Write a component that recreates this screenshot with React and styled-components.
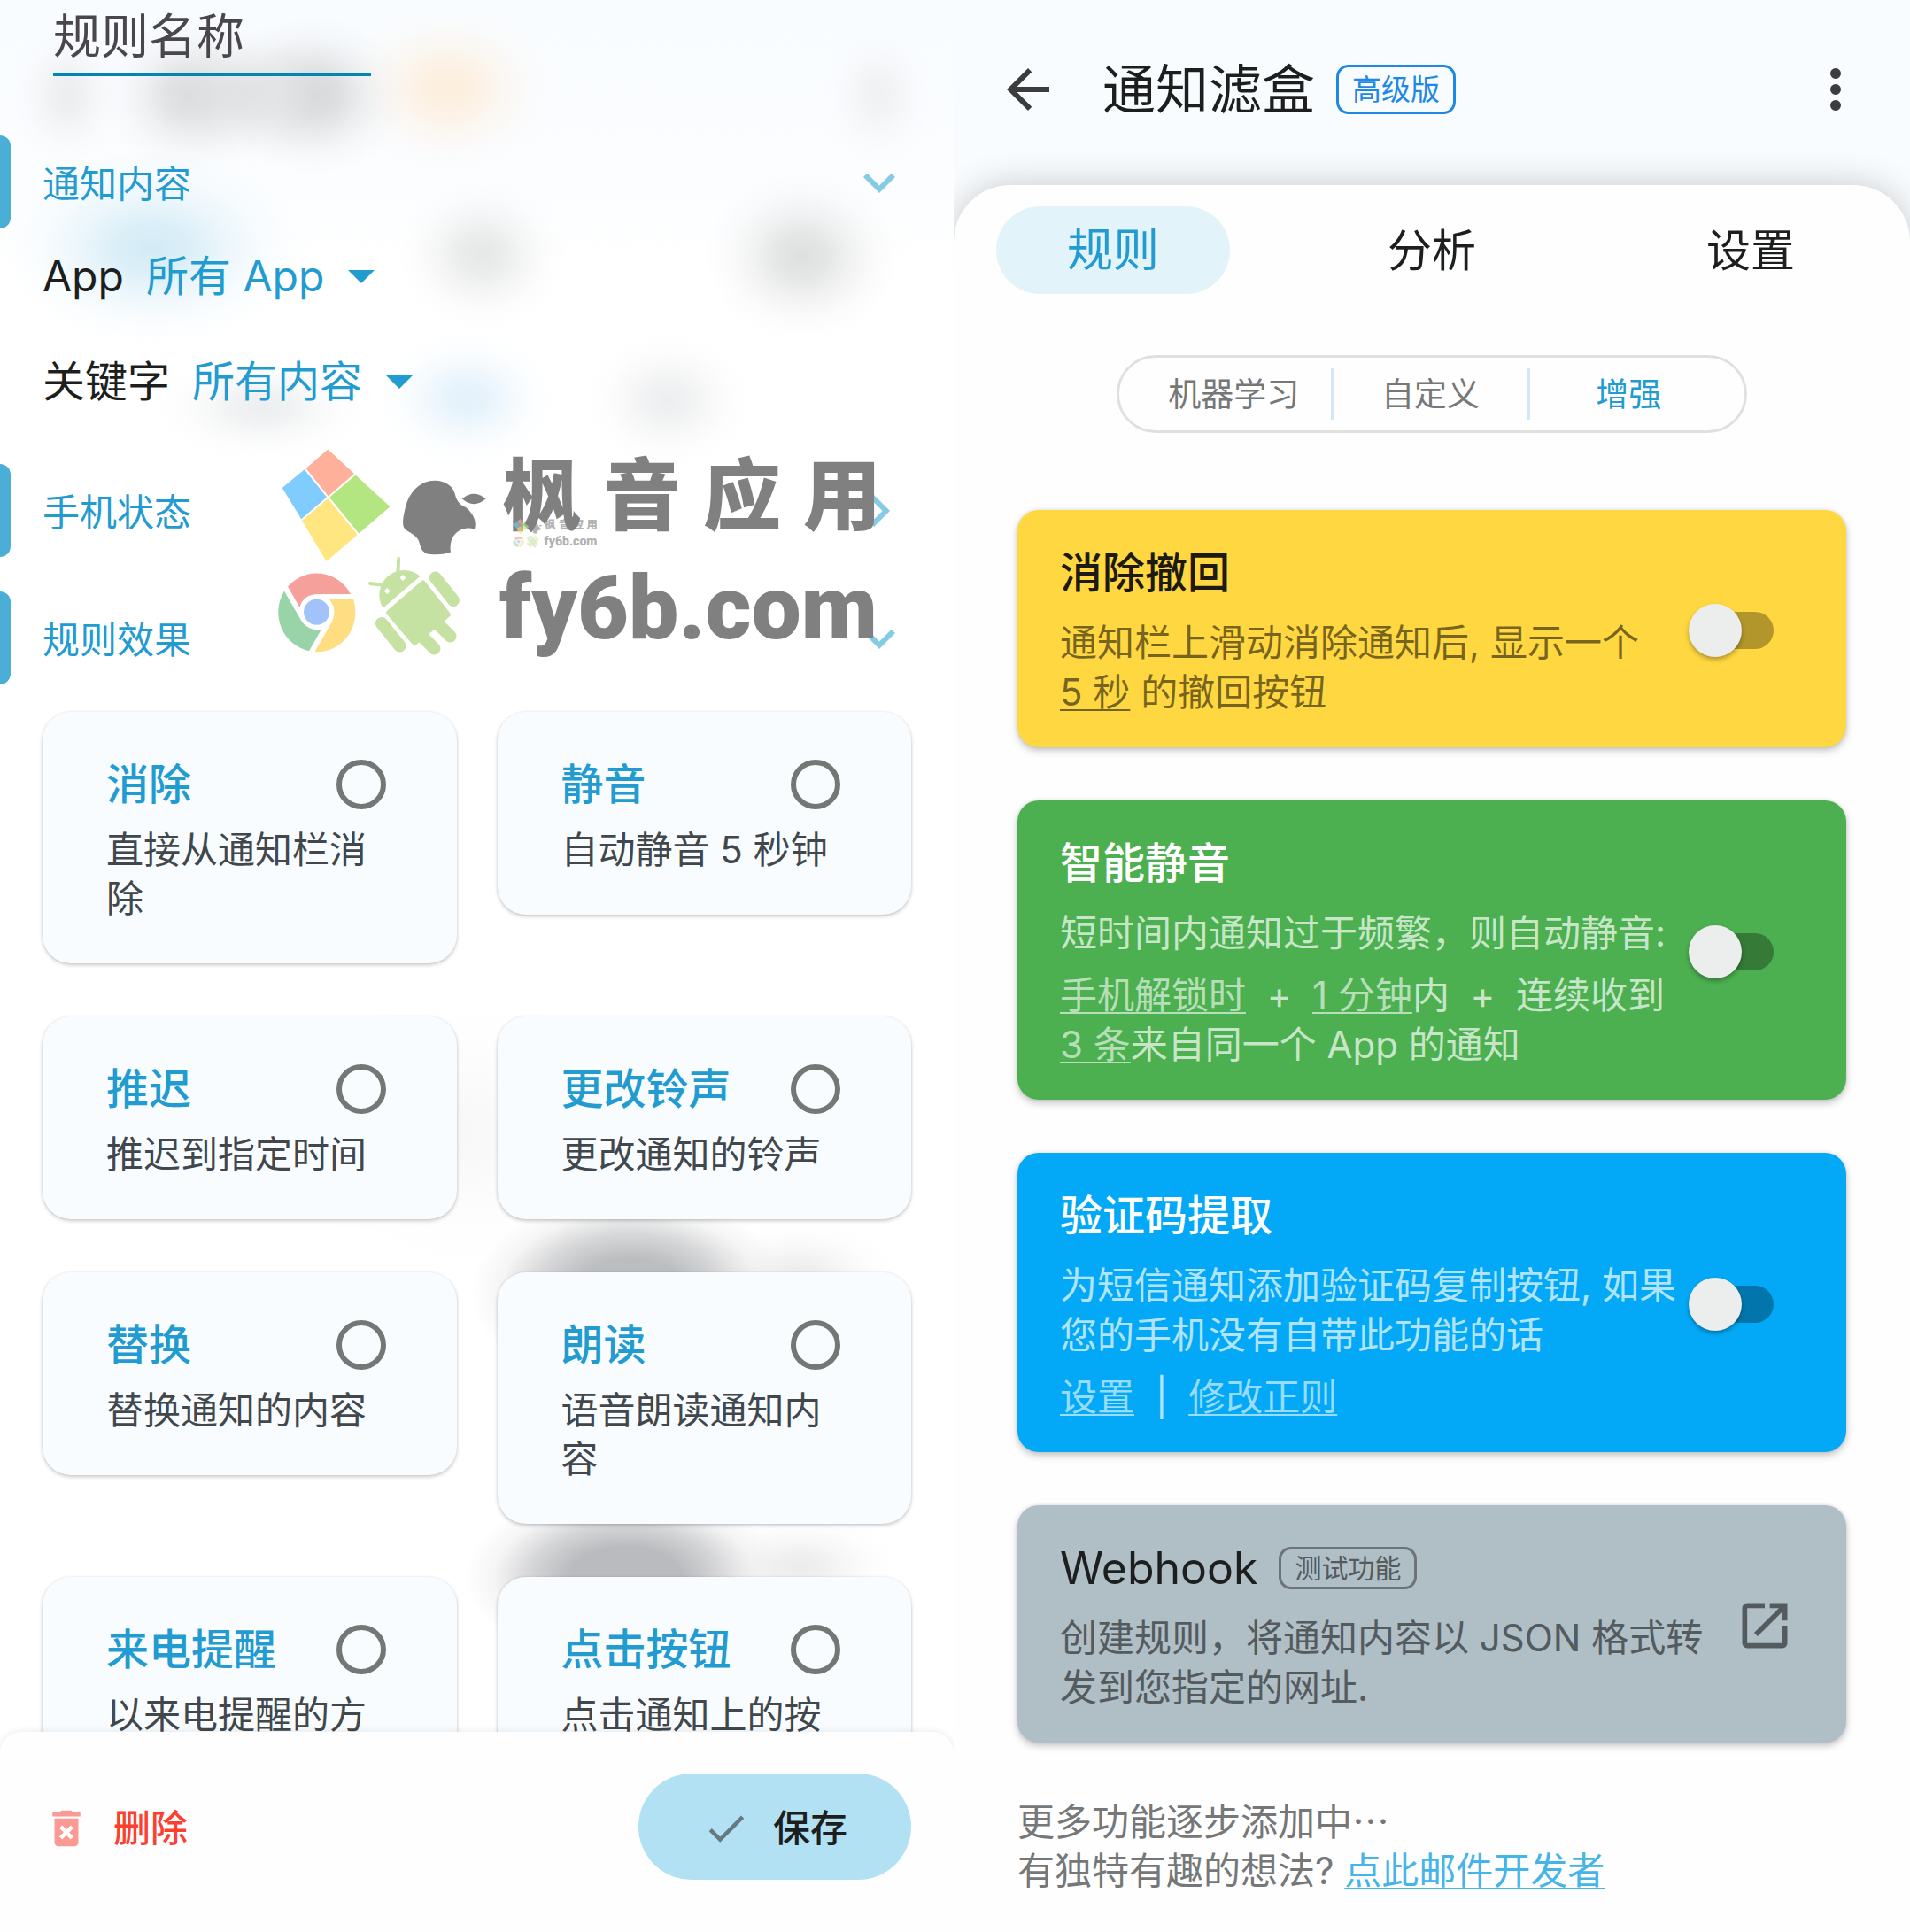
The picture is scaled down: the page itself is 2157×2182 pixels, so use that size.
import { useState } from 'react';
import styled, { createGlobalStyle } from 'styled-components';

const GlobalStyle = createGlobalStyle`
  * {
    box-sizing: border-box;
  }

  body {
    margin: 0;
    background: #fff;
    color: #1d1f1f;
    font-family: Inter, "Noto Sans CJK SC", sans-serif;
    font-size: 42px;
    line-height: 56px;
  }

  h1, h2, h3, p {
    margin: 0;
    font-weight: 400;
  }

  button, input, select {
    font: inherit;
    color: inherit;
    background: none;
    border: none;
    border-radius: 0;
    margin: 0;
    padding: 0;
    outline: none;
  }

  svg {
    display: block;
    flex: none;
  }
`;

// x, y, rx, ry, colour
const spots = [
  [76, 107, 65, 80, '236, 237, 238'],
  [213, 107, 100, 90, '220, 221, 222'],
  [284, 107, 120, 80, '226, 227, 228'],
  [355, 107, 105, 90, '213, 214, 216'],
  [506, 100, 120, 95, '253, 238, 220'],
  [992, 107, 65, 80, '240, 241, 243'],
  [172, 280, 170, 110, '211, 235, 246'],
  [544, 287, 95, 85, '230, 231, 231'],
  [906, 289, 110, 95, '222, 223, 223'],
  [296, 460, 120, 60, '236, 238, 239'],
  [527, 450, 100, 75, '226, 241, 251'],
  [754, 452, 95, 75, '237, 238, 239'],
  [520, 1280, 180, 160, '248, 248, 249'],
  [902, 1440, 110, 60, '236, 236, 237'],
  [902, 1770, 110, 60, '236, 236, 237'],
];

const shades = [
  [712, 1460, 180, 110, '188, 189, 191'],
  [706, 1782, 180, 100, '186, 187, 190'],
];

const glow = ([x, y, rx, ry, rgb]) =>
  `radial-gradient(${rx}px ${ry}px at ${x}px ${y}px, rgb(${rgb}), rgba(${rgb}, 0.8) 25%, rgba(${rgb}, 0.4) 50%, rgba(${rgb}, 0.12) 75%, rgba(${rgb}, 0))`;

const shade = ([x, y, rx, ry, rgb]) =>
  `radial-gradient(${rx}px ${ry}px at ${x}px ${y}px, rgb(${rgb}) 35%, rgba(${rgb}, 0.6) 60%, rgba(${rgb}, 0.15) 82%, rgba(${rgb}, 0))`;

const backdrop = [
  ...spots.map(glow),
  ...shades.map(shade),
  'linear-gradient(#f9fcff 0, #fbfdff 200px, #fff 300px)',
].join(', ');

const Page = styled.div`
  display: grid;
  grid-template-columns: 1077fr 1080fr;
  min-height: 100vh;
`;

/* rule editor */

const Editor = styled.section`
  position: relative;
  display: flex;
  flex-direction: column;
  height: 100vh;
  overflow: hidden;
  background: ${backdrop};
`;

const EditorBody = styled.div`
  flex: 1;
  min-height: 0;
  overflow: hidden;
`;

const NameInput = styled.input`
  display: block;
  width: 359px;
  height: 86px;
  margin: 0 0 67px 60px;
  border-bottom: 3px solid #0484b4;
  font-size: 54px;

  &::placeholder {
    color: #4a464e;
    opacity: 1;
  }
`;

const SectionHeader = styled.button`
  display: flex;
  align-items: center;
  gap: 36px;
  width: 100%;
  height: 105px;
  margin-top: ${(p) => (p.$spaced ? '39px' : '0')};
  padding-right: 48px;
  color: #229bd0;
  text-align: left;
  cursor: pointer;

  &::before {
    content: '';
    width: 12px;
    height: 105px;
    border-radius: 0 12px 12px 0;
    background: #4baed6;
  }

  svg {
    margin-left: auto;
    fill: #86cbe6;
    transform: ${(p) => (p.$open ? 'none' : 'rotate(-90deg)')};
  }
`;

const SectionTitle = styled.span`
  padding-top: 4px;
`;

const Fields = styled.div`
  display: grid;
  gap: 11px;
  padding: 0 48px;
`;

const Field = styled.div`
  display: flex;
  align-items: center;
  height: 108px;
  gap: 25px;
  font-size: 48px;
`;

const Picker = styled.div`
  display: flex;
  align-items: center;
  gap: 26px;
  color: #229bd0;

  select {
    appearance: none;
    line-height: 72px;
    cursor: pointer;
  }

  svg {
    fill: #229bd0;
  }
`;

const EffectGrid = styled.div`
  display: grid;
  grid-template-columns: 1fr 1fr;
  align-items: start;
  gap: 60px 46px;
  padding: 31px 48px 60px;
`;

const EffectCard = styled.label`
  padding: 48px 80px 46px 72px;
  border-radius: 32px;
  background: #f9fcff;
  box-shadow: 0 2px 4px rgba(0, 0, 0, 0.2), 0 0 3px rgba(0, 0, 0, 0.08);
  cursor: pointer;
`;

const EffectTop = styled.div`
  display: flex;
  align-items: center;
  justify-content: space-between;
  height: 68px;
  margin-bottom: 12px;

  h3 {
    color: #229bd0;
    font-size: 48px;
    font-weight: 500;
  }
`;

const Radio = styled.input`
  appearance: none;
  width: 56px;
  height: 56px;
  border: 6px solid #757777;
  border-radius: 50%;

  &:checked {
    border-color: #229bd0;
    background: #229bd0;
    background-clip: content-box;
    padding: 8px;
  }
`;

const EffectText = styled.p`
  color: #41484d;
  line-height: 55px;
`;

const ActionBar = styled.footer`
  display: flex;
  align-items: flex-start;
  justify-content: space-between;
  height: 226px;
  padding: 47px 48px 0;
  border-radius: 24px 24px 0 0;
  background: #fefefe;
  box-shadow: 0 0 8px rgba(0, 0, 0, 0.1);
`;

const ActionButton = styled.button`
  display: flex;
  align-items: center;
  gap: 26px;
  height: 120px;
  padding: ${(p) => (p.$primary ? '4px 72px 0' : '4px 0 0')};
  border-radius: 60px;
  background: ${(p) => (p.$primary ? '#b2e1f4' : 'none')};
  color: ${(p) => (p.$primary ? '#1d1f1f' : '#fb4030')};
  font-weight: 500;
  cursor: pointer;
`;

/* watermark, sized from its own font-size */

const Mark = styled.div`
  position: absolute;
  left: ${(p) => p.$x}px;
  top: ${(p) => p.$y}px;
  display: flex;
  gap: 0.09em;
  font-size: ${(p) => p.$size}px;
  color: #808080;
  opacity: ${(p) => p.$opacity};
  pointer-events: none;

  svg {
    width: 2.45em;
    height: 2.5em;
  }
`;

const MarkText = styled.div`
  padding-top: 0.08em;
`;

const MarkName = styled.div`
  display: flex;
  gap: 0.25em;
  padding-left: 0.04em;
  line-height: 0.9em;

  span {
    font-size: 0.88em;
    font-family: "Noto Sans CJK SC", sans-serif;
    font-weight: 900;
  }
`;

const MarkSite = styled.div`
  margin-top: 0.39em;
  line-height: 1em;
  font-family: Roboto, sans-serif;
  font-weight: 900;
`;

/* filter box */

const FilterBox = styled.section`
  display: flex;
  flex-direction: column;
  height: 100vh;
  overflow: hidden;
  background: #f8fcff;
`;

const AppBar = styled.header`
  display: flex;
  align-items: center;
  padding: 65px 48px 72px;

  h1 {
    margin: 0 24px 0 48px;
    font-size: 60px;
    line-height: 72px;
  }
`;

const IconButton = styled.button`
  cursor: pointer;
  margin-left: ${(p) => (p.$end ? 'auto' : '0')};

  svg {
    fill: #3c3c3e;
  }
`;

const Badge = styled.span`
  padding: 0 15px;
  border: 3px solid ${(p) => (p.$small ? '#6c7478' : '#1e88e5')};
  border-radius: 14px;
  color: ${(p) => (p.$small ? '#545b5f' : '#1e88e5')};
  font-size: ${(p) => (p.$small ? '30px' : '33px')};
  line-height: ${(p) => (p.$small ? '42px' : '50px')};
`;

const Sheet = styled.main`
  flex: 1;
  padding-top: 24px;
  border-radius: 64px 64px 0 0;
  background: #fefefe;
  box-shadow: 0 0 40px rgba(0, 0, 0, 0.2);
`;

const Tabs = styled.nav`
  display: grid;
  grid-template-columns: repeat(3, 1fr);
  justify-items: center;
`;

const Tab = styled.button`
  width: 264px;
  height: 99px;
  border-radius: 50px;
  background: ${(p) => (p.$active ? '#e3f3fa' : 'none')};
  color: ${(p) => (p.$active ? '#229bd0' : '#1d1f1f')};
  font-size: ${(p) => (p.$active ? '52px' : '50px')};
  cursor: pointer;
`;

const Segments = styled.div`
  display: grid;
  grid-template-columns: repeat(3, 1fr);
  align-items: center;
  width: 66%;
  height: 88px;
  margin: 69px auto 87px;
  padding: 0 20px;
  border: 3px solid #e0e0e0;
  border-radius: 44px;
`;

const Segment = styled.button`
  height: 58px;
  padding-top: 2px;
  border-right: 3px solid #cfe8f4;
  color: ${(p) => (p.$active ? '#229bd0' : '#757778')};
  font-size: 37px;
  cursor: pointer;

  &:last-child {
    border-right: none;
  }
`;

const Features = styled.div`
  display: grid;
  gap: 60px;
  padding: 0 72px;
`;

const tones = {
  yellow: { bg: '#ffd740', title: '#1c1a12', text: 'rgba(0, 0, 0, 0.54)', link: 'rgba(0, 0, 0, 0.54)' },
  green: { bg: '#4caf50', title: '#fff', text: 'rgba(255, 255, 255, 0.7)', link: 'rgba(255, 255, 255, 0.6)' },
  blue: { bg: '#03a9f7', title: '#fff', text: 'rgba(255, 255, 255, 0.7)', link: 'rgba(255, 255, 255, 0.6)' },
  grey: { bg: '#b0bec5', title: '#1d1f1f', text: '#545b5f', link: '#545b5f' },
};

const Feature = styled.article`
  display: flex;
  align-items: center;
  gap: ${(p) => (p.$tone === 'grey' ? '8px' : '0')};
  padding: 37px ${(p) => (p.$tone === 'grey' ? '58px' : '82px')} 34px 48px;
  border-radius: 24px;
  background: ${(p) => tones[p.$tone].bg};
  color: ${(p) => tones[p.$tone].text};
  box-shadow: 0 4px 8px rgba(0, 0, 0, 0.22), 0 0 4px rgba(0, 0, 0, 0.1);

  h2 {
    display: flex;
    align-items: center;
    gap: 24px;
    height: 68px;
    margin-bottom: 17px;
    color: ${(p) => tones[p.$tone].title};
    font-size: ${(p) => (p.$tone === 'grey' ? '50px' : '48px')};
    font-weight: ${(p) => (p.$tone === 'grey' ? 400 : 500)};
  }

  p + p {
    margin-top: 14px;
  }

  a {
    color: ${(p) => tones[p.$tone].link};
  }
`;

const FeatureText = styled.div`
  flex: 1;
`;

const Link = styled.a`
  display: inline-block;
  white-space: nowrap;
  text-decoration: underline;
  text-decoration-thickness: 2px;
  text-underline-offset: 4px;
`;

const Switch = styled.input`
  appearance: none;
  position: relative;
  display: flex;
  flex: none;
  width: 96px;
  height: 60px;
  cursor: pointer;

  &::after {
    content: '';
    position: absolute;
    inset: 9px 0 9px 8px;
    border-radius: 21px;
    background: rgba(0, 0, 0, 0.3);
  }

  &::before {
    content: '';
    z-index: 1;
    width: 60px;
    height: 60px;
    border-radius: 50%;
    background: #eceded;
    box-shadow: 0 3px 5px rgba(0, 0, 0, 0.3);
  }

  &:checked::before {
    margin-left: auto;
  }
`;

const Note = styled.div`
  padding: 59px 72px 0;
  color: #757778;
  line-height: 55px;

  a {
    color: #45b4e8;
  }
`;

const Dots = styled.span`
  font-family: "Noto Sans CJK SC", sans-serif;
`;

function Icon({ d, size = 72, fill }) {
  return (
    <svg width={size} height={size} viewBox="0 0 24 24" fill={fill} aria-hidden="true">
      <path d={d} />
    </svg>
  );
}

const paths = {
  chevron: 'M16.59 8.59 12 13.17 7.41 8.59 6 10l6 6 6-6z',
  back: 'M20 11H7.83l5.59-5.59L12 4l-8 8 8 8 1.41-1.41L7.83 13H20z',
  more: 'M12 8a2 2 0 1 0 0-4 2 2 0 0 0 0 4zm0 2a2 2 0 1 0 0 4 2 2 0 0 0 0-4zm0 6a2 2 0 1 0 0 4 2 2 0 0 0 0-4z',
  check: 'M9 16.17 4.83 12l-1.42 1.41L9 19 21 7l-1.41-1.41z',
  trash:
    'M6 19c0 1.1.9 2 2 2h8c1.1 0 2-.9 2-2V7H6zM8.46 11.88l1.41-1.41L12 12.59l2.12-2.12 1.41 1.41L13.41 14l2.12 2.12-1.41 1.41L12 15.41l-2.12 2.12-1.41-1.41L10.59 14zM15.5 4l-1-1h-5l-1 1H5v2h14V4z',
  open: 'M19 19H5V5h7V3H5a2 2 0 0 0-2 2v14a2 2 0 0 0 2 2h14c1.1 0 2-.9 2-2v-7h-2zM14 3v2h3.59l-9.83 9.83 1.41 1.41L19 6.41V10h2V3z',
};

function Logos() {
  return (
    <svg viewBox="310 500 245 250" aria-hidden="true">
      <path fill="#ffb09a" d="M345.5 529 370.3 507.5 400 535 370.7 560.5z" />
      <path fill="#b3e680" d="M401.5 536.5 440.5 572.3 405.3 602.5 372 561.7z" />
      <path fill="#80ccff" d="M318.7 551 343.8 530.3 369 561.5 340.3 586.3z" />
      <path fill="#ffe680" d="M370.3 563 403.7 604 368.5 634 341 588z" />
      <path
        fill="#808080"
        d="M492 542.7C503 543 511 549 513.500 557C515 563 517 567 520 569.500C523 572 528 573 531 578C536 584 538 590 536 597.500C520 593 506 605 509 623.500C500 627 488 626.500 482 625.500C475 622 475 617 473 611C469 603 462 602 457 597C453 592 456 580 459 569C464 554 476 542 492 542.7z"
      />
      <path fill="#808080" d="M521.7 563.3Q535 552 548.8 563.3Q535 575 521.7 563.3z" />
      <path fill="#f5a09b" d="M325 662.5A43.6 44.8 0 0 1 396 671H358C348 671.5 341 676 338.5 686z" />
      <path fill="#98d4a8" d="M321 667.5 338.5 698C343 707 351 712 362.500 711.5L349 735.3A43.6 44.8 0 0 1 321 667.5z" />
      <path fill="#ffdd82" d="M372 677H399A43.6 44.8 0 0 1 355.500 736.3L375 702C379 692 378 684 372 677z" />
      <circle cx="357.5" cy="691.3" r="14.5" fill="#a1c3fa" />
      <g fill="#c5e2a2" stroke="#c5e2a2" strokeLinecap="round">
        <path stroke="none" d="M432.5 686.7A28 28 0 0 1 474.5 650.7z" />
        <path strokeWidth="4" d="M450.2 631 449.5 645M418 659 430 660.5" />
        <path strokeWidth="5" strokeLinejoin="round" d="M477.800 658 506.5 694 468 726.5 438.5 692z" />
        <path strokeWidth="14" d="M491.7 652.5 512 678M431 704 451.5 729.5M494 704 508.5 718.5M478 720 490.500 732.500" />
      </g>
      <path fill="#fff" d="M455 649l3.5 3.5-3.5 3.5-3.5-3.5zM437.2 664l3.5 3.5-3.5 3.5-3.5-3.5z" />
    </svg>
  );
}

function Watermark({ x, y, size, opacity = 1 }) {
  return (
    <Mark $x={x} $y={y} $size={size} $opacity={opacity}>
      <Logos />
      <MarkText>
        <MarkName>
          <span>枫</span>
          <span>音</span>
          <span>应</span>
          <span>用</span>
        </MarkName>
        <MarkSite>fy6b.com</MarkSite>
      </MarkText>
    </Mark>
  );
}

function Select({ id, label, option }) {
  return (
    <Field>
      <label htmlFor={id}>{label}</label>
      <Picker>
        <select id={id}>
          <option>{option}</option>
        </select>
        <svg width="30" height="15" viewBox="0 0 30 15" aria-hidden="true">
          <path d="M0 0h30L15 15z" />
        </svg>
      </Picker>
    </Field>
  );
}

const effects = [
  ['消除', '直接从通知栏消除'],
  ['静音', '自动静音 5 秒钟'],
  ['推迟', '推迟到指定时间'],
  ['更改铃声', '更改通知的铃声'],
  ['替换', '替换通知的内容'],
  ['朗读', '语音朗读通知内容'],
  ['来电提醒', '以来电提醒的方式'],
  ['点击按钮', '点击通知上的按钮'],
];

function RuleEditor() {
  return (
    <Editor>
      <EditorBody>
        <NameInput type="text" placeholder="规则名称" aria-label="规则名称" />

        <SectionHeader type="button" $open aria-expanded="true">
          <SectionTitle>通知内容</SectionTitle>
          <Icon d={paths.chevron} />
        </SectionHeader>
        <Fields>
          <Select id="app" label="App" option="所有 App" />
          <Select id="keyword" label="关键字" option="所有内容" />
        </Fields>

        <SectionHeader type="button" $spaced aria-expanded="false">
          <SectionTitle>手机状态</SectionTitle>
          <Icon d={paths.chevron} />
        </SectionHeader>

        <SectionHeader type="button" $spaced $open aria-expanded="true">
          <SectionTitle>规则效果</SectionTitle>
          <Icon d={paths.chevron} />
        </SectionHeader>
        <EffectGrid>
          {effects.map(([title, text]) => (
            <EffectCard key={title}>
              <EffectTop>
                <h3>{title}</h3>
                <Radio type="radio" name="effect" value={title} />
              </EffectTop>
              <EffectText>{text}</EffectText>
            </EffectCard>
          ))}
        </EffectGrid>
      </EditorBody>

      <ActionBar>
        <ActionButton type="button">
          <Icon d={paths.trash} size={54} fill="#fb9a93" />
          删除
        </ActionButton>
        <ActionButton type="button" $primary>
          <Icon d={paths.check} size={54} fill="#66797f" />
          保存
        </ActionButton>
      </ActionBar>

      <Watermark x={310} y={500} size={100} />
      <Watermark x={579} y={585} size={14} opacity={0.6} />
    </Editor>
  );
}

const tabs = ['规则', '分析', '设置'];
const segments = ['机器学习', '自定义', '增强'];

function FilterPanel() {
  const [tab, setTab] = useState('规则');
  const [segment, setSegment] = useState('增强');

  return (
    <FilterBox>
      <AppBar>
        <IconButton type="button" aria-label="返回">
          <Icon d={paths.back} />
        </IconButton>
        <h1>通知滤盒</h1>
        <Badge>高级版</Badge>
        <IconButton type="button" $end aria-label="更多">
          <Icon d={paths.more} />
        </IconButton>
      </AppBar>

      <Sheet>
        <Tabs>
          {tabs.map((name) => (
            <Tab key={name} type="button" $active={name === tab} onClick={() => setTab(name)}>
              {name}
            </Tab>
          ))}
        </Tabs>
        <Segments>
          {segments.map((name) => (
            <Segment key={name} type="button" $active={name === segment} onClick={() => setSegment(name)}>
              {name}
            </Segment>
          ))}
        </Segments>

        <Features>
          <Feature $tone="yellow">
            <FeatureText>
              <h2>消除撤回</h2>
              <p>
                通知栏上滑动消除通知后, 显示一个 <Link href="#delay">5 秒</Link> 的撤回按钮
              </p>
            </FeatureText>
            <Switch type="checkbox" role="switch" aria-label="消除撤回" />
          </Feature>

          <Feature $tone="green">
            <FeatureText>
              <h2>智能静音</h2>
              <p>短时间内通知过于频繁，则自动静音:</p>
              <p>
                <Link href="#unlock">手机解锁时</Link>
                {'\u00a0 + \u00a0'}
                <Link href="#minutes">1 分钟</Link>
                {'内\u00a0 + \u00a0连续收到 '}
                <Link href="#count">3 条</Link>
                来自同一个 App 的通知
              </p>
            </FeatureText>
            <Switch type="checkbox" role="switch" aria-label="智能静音" />
          </Feature>

          <Feature $tone="blue">
            <FeatureText>
              <h2>验证码提取</h2>
              <p>为短信通知添加验证码复制按钮, 如果您的手机没有自带此功能的话</p>
              <p>
                <Link href="#setup">设置</Link>
                {'\u00a0 | \u00a0'}
                <Link href="#regex">修改正则</Link>
              </p>
            </FeatureText>
            <Switch type="checkbox" role="switch" aria-label="验证码提取" />
          </Feature>

          <Feature $tone="grey">
            <FeatureText>
              <h2>
                Webhook
                <Badge $small>测试功能</Badge>
              </h2>
              <p>创建规则，将通知内容以 JSON 格式转发到您指定的网址.</p>
            </FeatureText>
            <Icon d={paths.open} size={68} fill="#545b5f" />
          </Feature>
        </Features>

        <Note>
          <p>
            更多功能逐步添加中<Dots>…</Dots>
          </p>
          <p>
            有独特有趣的想法? <Link href="#mail">点此邮件开发者</Link>
          </p>
        </Note>
      </Sheet>
    </FilterBox>
  );
}

export default function App() {
  return (
    <Page lang="zh-CN">
      <GlobalStyle />
      <RuleEditor />
      <FilterPanel />
    </Page>
  );
}
